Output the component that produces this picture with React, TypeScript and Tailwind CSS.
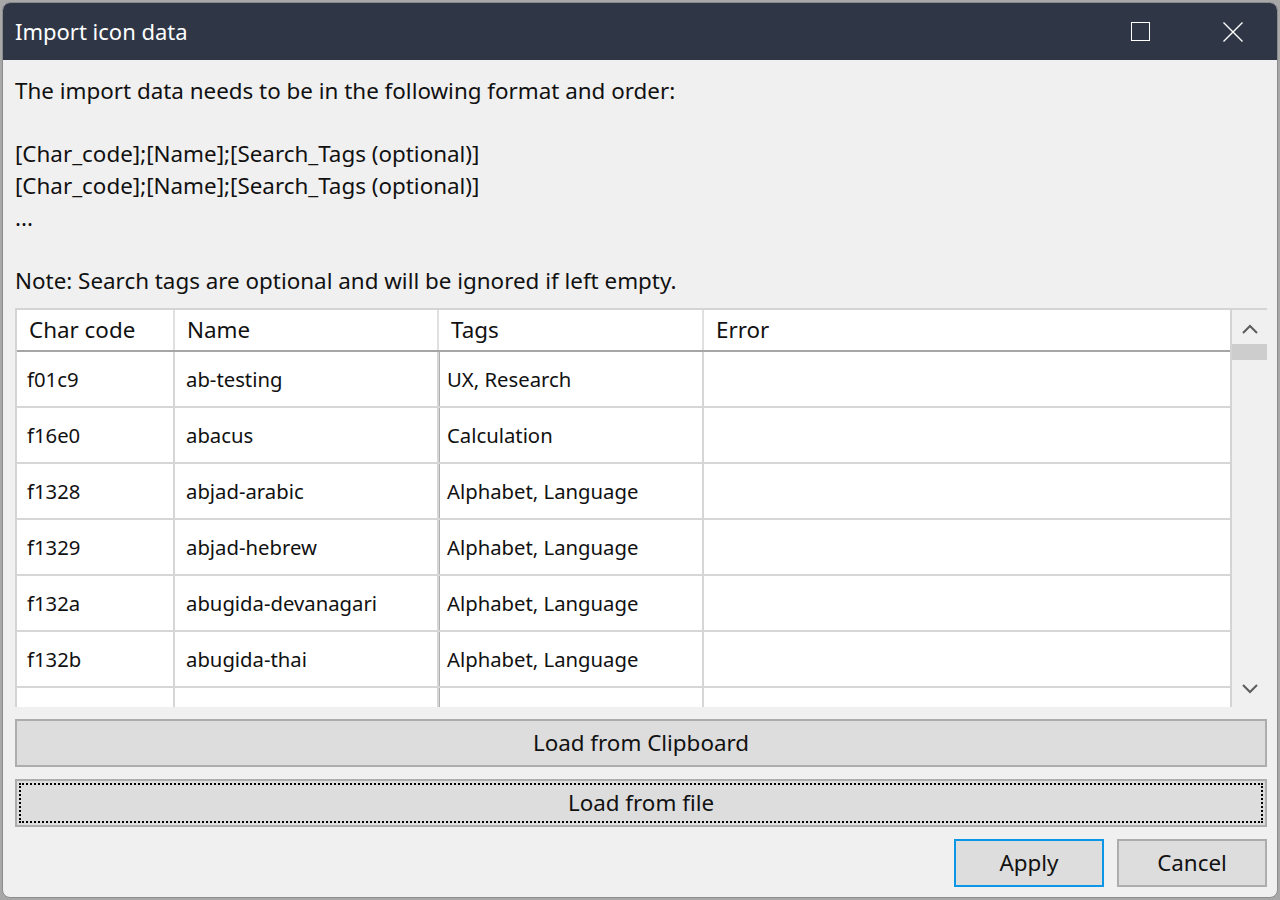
const rows = [
  { code: 'f01c9', name: 'ab-testing', tags: 'UX, Research' },
  { code: 'f16e0', name: 'abacus', tags: 'Calculation' },
  { code: 'f1328', name: 'abjad-arabic', tags: 'Alphabet, Language' },
  { code: 'f1329', name: 'abjad-hebrew', tags: 'Alphabet, Language' },
  { code: 'f132a', name: 'abugida-devanagari', tags: 'Alphabet, Language' },
  { code: 'f132b', name: 'abugida-thai', tags: 'Alphabet, Language' },
  { code: '', name: '', tags: '' },
];

const font = { fontFamily: '"Noto Sans", "Open Sans", sans-serif' };

export default function App() {
  return (
    <div className="w-[1280px] h-[900px] bg-[#a8a8a8] pt-[2px] pl-[2px] pr-[2px] pb-[2px]" style={font}>
      <div className="w-full h-full flex flex-col bg-[#f0f0f0] rounded-[8px] overflow-hidden border border-[#8c8c8c]">
        {/* Title bar */}
        <div className="h-[57px] shrink-0 bg-[#2f3646] flex items-center justify-between">
          <span className="pl-[12px] text-white text-[22px] pb-[1px]">Import icon data</span>
          <div className="flex items-center h-full">
            <div className="w-[97px] h-full flex items-center justify-center">
              <div className="w-[19px] h-[19px] border border-white" />
            </div>
            <div className="w-[88px] h-full flex items-center justify-center">
              <svg width="20" height="20" viewBox="0 0 20 20">
                <path d="M0.5 0.5 L19.5 19.5 M19.5 0.5 L0.5 19.5" stroke="white" strokeWidth="1.4" />
              </svg>
            </div>
          </div>
        </div>

        {/* Body */}
        <div className="flex-1 flex flex-col pl-[12px] pr-[10px] pt-[15px] pb-[11px] text-[#111]">
          <div className="text-[22.4px] leading-[31.7px]">
            <div>The import data needs to be in the following format and order:</div>
            <div>&nbsp;</div>
            <div>[Char_code];[Name];[Search_Tags (optional)]</div>
            <div>[Char_code];[Name];[Search_Tags (optional)]</div>
            <div>...</div>
            <div>&nbsp;</div>
            <div>Note: Search tags are optional and will be ignored if left empty.</div>
          </div>

          {/* Table */}
          <div className="mt-[11px] h-[399px] flex border-t-2 border-l-2 border-[#d4d4d4] overflow-hidden">
            <div className="flex-1 bg-white overflow-hidden">
              <div className="grid grid-cols-[158px_264px_265px_1fr] h-[42px] border-b-2 border-[#a6a6a6]">
                {['Char code', 'Name', 'Tags', 'Error'].map((h, i) => (
                  <div
                    key={h}
                    className={`flex items-center text-[22.4px] pl-[12px] ${i < 3 ? 'border-r-2 border-[#e0e0e0]' : ''}`}
                  >
                    {h}
                  </div>
                ))}
              </div>
              {rows.map((r, idx) => (
                <div key={idx} className="grid grid-cols-[158px_264px_265px_1fr] h-[56px]">
                  <div className="flex items-center pl-[10px] text-[20.3px] border-r-2 border-b-2 border-[#d6d6d6]">{r.code}</div>
                  <div className="flex items-center pl-[11px] text-[20.3px] border-r-2 border-b-2 border-[#d6d6d6]">{r.name}</div>
                  <div className="flex items-center pl-[8px] text-[20.3px] border-r-2 border-b-2 border-[#d6d6d6] shadow-[inset_1px_0_0_#b0b0b0]">{r.tags}</div>
                  <div className="flex items-center border-b-2 border-[#d6d6d6]" />
                </div>
              ))}
            </div>
            {/* Scrollbar */}
            <div className="w-[37px] shrink-0 bg-[#f0f0f0] border-l-2 border-[#d4d4d4] flex flex-col items-center justify-between">
              <div className="flex flex-col items-center w-full">
                <svg width="16" height="10" viewBox="0 0 16 10" className="mt-[14px]">
                  <path d="M1 9 L8 2 L15 9" stroke="#5c5c5c" strokeWidth="2" fill="none" />
                </svg>
                <div className="w-full h-[16px] bg-[#cdcdcd] mt-[10px]" />
              </div>
              <svg width="16" height="10" viewBox="0 0 16 10" className="mb-[13px]">
                <path d="M1 1 L8 8 L15 1" stroke="#5c5c5c" strokeWidth="2" fill="none" />
              </svg>
            </div>
          </div>

          {/* Buttons */}
          <button className="mt-[12px] h-[48px] w-full bg-[#dddddd] border-2 border-[#adadad] text-[22.4px] text-[#111]">
            Load from Clipboard
          </button>
          <button className="mt-[12px] h-[48px] w-full bg-[#dddddd] border-2 border-[#adadad] p-[2px] text-[22.4px] text-[#111]">
            <div className="w-full h-full border-2 border-dotted border-black flex items-center justify-center">
              Load from file
            </div>
          </button>
          <div className="mt-[12px] flex justify-end gap-[13px]">
            <button className="w-[150px] h-[48px] bg-[#dddddd] border-2 border-[#0b97e6] text-[22.4px] text-[#111]">Apply</button>
            <button className="w-[150px] h-[48px] bg-[#dddddd] border-2 border-[#adadad] text-[22.4px] text-[#111]">Cancel</button>
          </div>
        </div>
      </div>
    </div>
  );
}
